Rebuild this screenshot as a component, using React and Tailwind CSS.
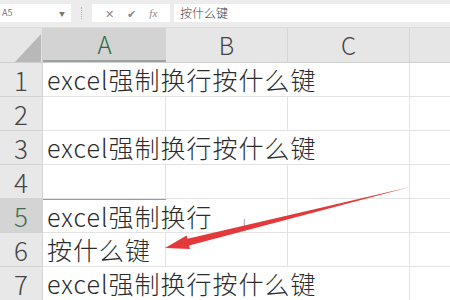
import React from "react";

const FONT = { fontFamily: '"Noto Sans CJK SC", "Noto Sans", sans-serif' };

const rows = [
  { n: "1", text: "excel强制换行按什么键", span: 3 },
  { n: "2", text: "", span: 0 },
  { n: "3", text: "excel强制换行按什么键", span: 3 },
  { n: "4", text: "", span: 0 },
  { n: "5", text: "excel强制换行", span: 2, sel: true },
  { n: "6", text: "按什么键", span: 1 },
  { n: "7", text: "excel强制换行按什么键", span: 3 },
];

export default function App() {
  return (
    <div className="relative w-[450px] h-[300px] overflow-hidden bg-white" style={FONT}>
      {/* formula bar */}
      <div className="h-[28px] bg-[#ececec] pt-[4px] border-b border-[#dcdcdc]">
        <div className="flex h-[18px] items-stretch">
          <div className="w-[71px] bg-white flex items-center justify-between pl-[2px] pr-[6px]">
            <span className="text-[9px] text-[#777]">A5</span>
            <span className="text-[6px] text-[#777]">▼</span>
          </div>
          <div className="w-[21px] flex items-center justify-center">
            <div className="h-[12px] border-l border-dotted border-[#b0b0b0]" />
          </div>
          <div className="w-[78px] bg-white flex items-center justify-around px-[6px] text-[#888]">
            <span className="text-[11px]">✕</span>
            <span className="text-[11px]">✔</span>
            <span className="text-[11px] italic" style={{ fontFamily: '"Liberation Serif", serif' }}>fx</span>
          </div>
          <div className="w-[4px]" />
          <div className="flex-1 bg-white flex items-center pl-[6px]">
            <span className="text-[12px] text-[#444] font-light">按什么键</span>
          </div>
        </div>
      </div>
      {/* column header */}
      <div className="flex h-[35px] bg-[#e6e6e6] border-b border-[#cfcfcf]">
        <div className="relative w-[43px] border-r border-[#cfcfcf]">
          <svg className="absolute left-0 top-0" width="43" height="35">
            <polygon points="15,34 41,34 41,6" fill="#b8b8b8" />
          </svg>
        </div>
        <div className="w-[123px] bg-[#d3d3d3] border-b-2 border-[#9aa39e] flex items-center justify-center text-[24px] text-[#2a6a45] font-light leading-none">A</div>
        <div className="w-[122px] border-r border-[#d6d6d6] flex items-center justify-center text-[24px] text-[#444] font-light leading-none">B</div>
        <div className="w-[122px] border-r border-[#d6d6d6] flex items-center justify-center text-[24px] text-[#444] font-light leading-none">C</div>
        <div className="flex-1" />
      </div>
      {/* rows */}
      {rows.map((r) => (
        <div key={r.n} className="flex h-[34px]">
          <div
            className={
              "w-[43px] border-r border-b border-[#d3d3d3] flex items-center justify-center text-[26px] font-light leading-none " +
              (r.sel ? "bg-[#d4d4d4] text-[#3f6f55]" : "bg-[#e8e8e8] text-[#444]")
            }
          >
            {r.n}
          </div>
          <div
            className={
              "w-[123px] border-b border-[#e3e3e3] flex items-center pl-[4px] whitespace-nowrap text-[25px] text-[#2b2b2b] font-light leading-none overflow-visible " +
              (r.span > 1 ? "" : "border-r") +
              (r.sel ? " border-t border-t-[#9a9a9a]" : "")
            }
          >
            <span className="tracking-[1px]">{r.text}</span>
          </div>
          <div className={"w-[122px] border-b border-[#e3e3e3] " + (r.span > 2 ? "" : "border-r")} />
          <div className="w-[122px] border-b border-r border-[#e3e3e3]" />
          <div className="flex-1 border-b border-[#e3e3e3]" />
        </div>
      ))}
      {/* I-beam cursor */}
      <div className="absolute left-[243px] top-[219px] text-[9px] text-[#999] leading-none" style={{ fontFamily: '"DejaVu Sans", sans-serif' }}>I</div>
      {/* red arrow */}
      <svg className="absolute left-0 top-0 pointer-events-none" width="450" height="300">
        <polygon points="410,187 187.5,238.8 186.6,235.4 165,248 190,249 189.1,245.6" fill="#e4393b" />
      </svg>
    </div>
  );
}
